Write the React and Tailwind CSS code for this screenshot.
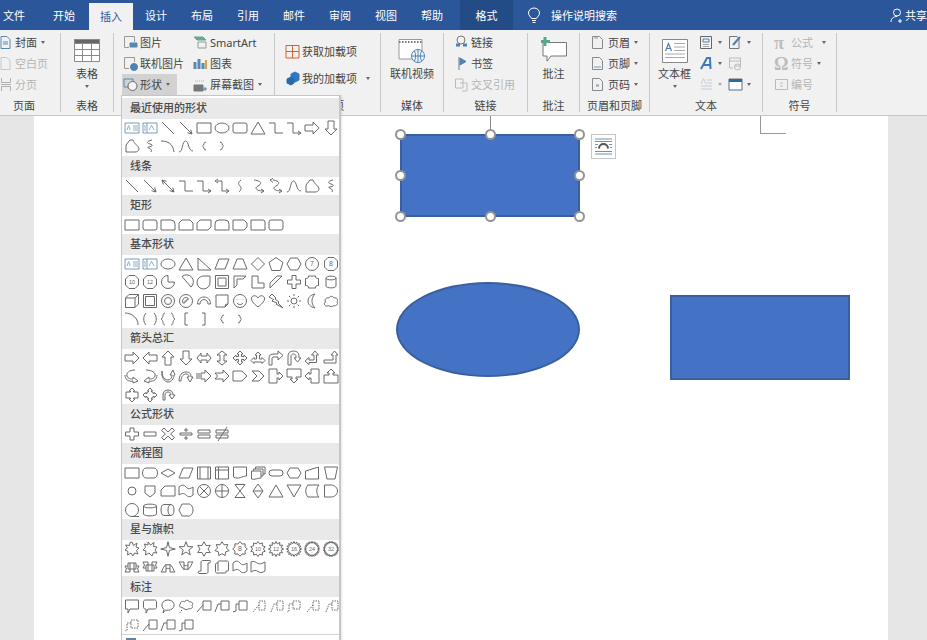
import React from 'react';

const star = (n, r2 = 4.6, r1 = 7.3) => {
  let d = '';
  for (let i = 0; i < n * 2; i++) {
    const r = i % 2 ? r2 : r1;
    const a = (Math.PI * i) / n - Math.PI / 2;
    d += `${i ? 'L' : 'M'}${(8 + r * Math.cos(a)).toFixed(2)} ${(8 + r * Math.sin(a)).toFixed(2)}`;
  }
  return d + 'Z';
};

const C = 'M1.5 8a6.5 6.5 0 1 0 13 0a6.5 6.5 0 1 0-13 0Z';
const OCT = 'M5 1.5H11L14.5 5V11L11 14.5H5L1.5 11V5Z';
const RECT = 'M1 3H15V13H1Z';

const S = {
  tb: 'M1 3H15V13H1Z', vtb: 'M1 3H15V13H1Z M5 3V13',
  line: 'M2 2L14 14', arrow: 'M2 2L14 14M14 14L9.5 12.7M14 14L12.7 9.5',
  dbl: 'M2 2L14 14M14 14L9.5 12.7M14 14L12.7 9.5M2 2L6.5 3.3M2 2L3.3 6.5',
  rect: RECT, oval: 'M1 8a7 5 0 1 0 14 0a7 5 0 1 0-14 0Z',
  round: 'M3 3H13a2 2 0 0 1 2 2V11a2 2 0 0 1-2 2H3a2 2 0 0 1-2-2V5a2 2 0 0 1 2-2Z',
  tri: 'M8 2L15 14H1Z', rtTri: 'M2 2L15 14H2Z', para: 'M5 3H15L11 13H1Z', trap: 'M5 3H11L15 13H1Z',
  diamond: 'M8 1.5L14.5 8L8 14.5L1.5 8Z', penta: 'M8 1.5L15 6.5L12.3 14.5H3.7L1 6.5Z', hex: 'M4.5 2H11.5L15 8L11.5 14H4.5L1 8Z',
  elbow: 'M1 3H7V13H15', elbowArr: 'M1 3H7V13H15M15 13L12 11M15 13L12 15',
  elbowDbl: 'M3 3H8V13H15M15 13L12 11M15 13L12 15M1 3L4 1M1 3L4 5',
  rArrow: 'M1 5H9V2L15 8L9 14V11H1Z', lArrow: 'M15 5H7V2L1 8L7 14V11H15Z',
  uArrow: 'M5 15V7H2L8 1L14 7H11V15Z', dArrow: 'M5 1V9H2L8 15L14 9H11V1Z',
  lr: 'M1 8L5 3V6H11V3L15 8L11 13V10H5V13Z', ud: 'M8 1L13 5H10V11H13L8 15L3 11H6V5H3Z',
  quad: 'M8 1L11 4H9.5V6.5H12V5L15 8L12 11V9.5H9.5V12H11L8 15L5 12H6.5V9.5H4V11L1 8L4 5V6.5H6.5V4H5Z',
  lru: 'M8 2L11 5H9.5V9H12V7.5L15 10.5L12 13.5V12H4V13.5L1 10.5L4 7.5V9H6.5V5H5Z',
  bent: 'M1 15V8C1 5 3 4 6 4H10V1L15 5.5L10 10V7H6C4.5 7 4 7.5 4 9V15Z',
  uturn: 'M2 15V6C2 3 4 1 7.5 1S13 3 13 6V8H15L11.5 12L8 8H10V6C10 5 9 4 7.5 4S5 5 5 6V15Z',
  lUp: 'M1 11L5 7.5V10H10V5H7.5L11 1L14.5 5H12.5V12.5H5V14.5Z',
  bUp: 'M1 10H10V5H8L11.5 1L15 5H13V13H1Z',
  cRight: 'M11 2C5 2 2 5 3 8S7 11 9 11V9L14 13L9 15V13C4 14 1 11 1 7',
  cLeft: 'M4 2C10 2 14 5 13 8S9 11 7 11V9L2 13L7 15V13C12 14 15 11 15 7',
  cUp: 'M2 3C2 9 5 12 8 12S12 9 12 7H10L13 2L15 7H14C14 11 11 14 8 14S1 10 2 3Z',
  cDown: 'M1 13C1 7 4 4 8 4S13 6 13 9H15L12 14L9 9H11C11 7 10 6 8 6S3 8 3 13Z',
  striped: 'M1 5V11M3 5V11M5 5H9V2L15 8L9 14V11H5Z', notched: 'M1 5H9V2L15 8L9 14V11H1L3.5 8Z',
  home: 'M1 3H10L15 8L10 13H1Z', chevron: 'M2 3H9L14 8L9 13H2L7 8Z',
  rCall: 'M1 1H9V6H11V4L15 8L11 12V10H9V15H1Z', dCall: 'M1 1H15V9H10V11H12L8 15L4 11H6V9H1Z',
  lCall: 'M15 1H7V6H5V4L1 8L5 12V10H7V15H15Z', uCall: 'M1 15H15V7H10V5H12L8 1L4 5H6V7H1Z',
  udCall: 'M8 1L11 4H9.5V5H14V11H9.5V12H11L8 15L5 12H6.5V11H2V5H6.5V4H5Z',
  qCall: 'M8 1L10.5 3.5H9.5V5H11V6.5H12.5V5.5L15 8L12.5 10.5V9.5H11V11H9.5V12.5H10.5L8 15L5.5 12.5H6.5V11H5V9.5H3.5V10.5L1 8L3.5 5.5V6.5H5V5H6.5V3.5H5.5Z',
  circ: 'M3 13V8C3 5 5 3 8 3S13 5 13 8H15L12 12L9 8H11C11 6 10 5 8 5S5 6 5 8V13Z',
  free: 'M2 14V7L6 2H9C10 6 15 8 15 11C15 13 13 14 11 14Z',
  scrib: 'M10 2C5 3 4 5 8 6C12 7 10 9 6 9C5 11 11 10 9 14', curveC: 'M1 3C8 3 13 6 14 14', curve: 'M1 14C5 14 4 3 7.5 3S10 13 15 13',
  sCurve: 'M9 2C6 4 6 6 8 8S9 12 7 14', sArr: 'M4 2C12 3 12 6 8 8S6 13 14 13M14 13L11 11M14 13L11 15',
  sDbl: 'M5 2C12 3 12 6 8 8S6 13 14 13M14 13L11 11M14 13L11 15M2 2L5 0.5M2 2L5 4.5',
  bL: 'M10 4C7 4 8.5 7.5 6.5 8C8.5 8.5 7 12 10 12', bR: 'M6 4C9 4 7.5 7.5 9.5 8C7.5 8.5 9 12 6 12',
  sq1: 'M1 3H11a4 4 0 0 1 4 4V13H1Z', sq2: 'M5 3H11a4 4 0 0 1 4 4V13H1V7a4 4 0 0 1 4-4Z',
  snip2: 'M4 3H12L15 6V13H1V6Z', snipD: 'M4 3H15V10L12 13H1V6Z', snip3: 'M1 3H12L15 6V10L12 13H1Z',
  sq3: 'M1 3H13a2 2 0 0 1 2 2V13H1Z', sq4: 'M3 3H15V11a2 2 0 0 1-2 2H1V5a2 2 0 0 1 2-2Z',
  c7: C, c8: OCT, c10: OCT, c12: OCT,
  pie: 'M8 1.5a6.5 6.5 0 1 0 6.5 6.5H8Z', chord: 'M4 2.5L13 13a6.5 6.5 0 1 0-9-10.5Z',
  tear: 'M14 2H8a6.5 6.5 0 1 0 6 6Z', frame: 'M1.5 1.5H14.5V14.5H1.5ZM4 4H12V12H4Z',
  half: 'M2 14V2H14L11 5H5V11Z', lshape: 'M2 2H8V9H14V14H2Z', diag: 'M2 14V9L9 2H14Z',
  cross: 'M6 1.5H10V6H14.5V10H10V14.5H6V10H1.5V6H6Z', plaque: 'M4.5 2H11.5C11.5 4 12.5 4.5 14.5 4.5V11.5C12.5 11.5 11.5 12 11.5 14H4.5C4.5 12 3.5 11.5 1.5 11.5V4.5C3.5 4.5 4.5 4 4.5 2Z',
  can: 'M3 4C3 1.5 13 1.5 13 4V12C13 14.5 3 14.5 3 12ZM3 4C3 6.5 13 6.5 13 4',
  cube: 'M1.5 5H11V14.5H1.5ZM1.5 5L5 1.5H14.5L11 5M14.5 1.5V11L11 14.5',
  bevel: 'M1.5 1.5H14.5V14.5H1.5ZM3.5 3.5H12.5V12.5H3.5Z', donut: C + 'M4.5 8a3.5 3.5 0 1 0 7 0a3.5 3.5 0 1 0-7 0Z',
  noSym: C + 'M4.5 8a3.5 3.5 0 0 0 .8 2.2L10.2 5.3A3.5 3.5 0 0 0 4.5 8ZM5.8 10.7L10.7 5.8', arcB: 'M1.5 11C1.5 7 4 4 8 4S14.5 7 14.5 11H12C12 8.5 10.5 6.5 8 6.5S4 8.5 4 11Z',
  fold: 'M2 2H14V11L11 14H2ZM11 14L11.5 11.5L14 11', smile: C + 'M5 6v.5M11 6v.5M5 10C6.5 12 9.5 12 11 10',
  heart: 'M8 14C3 10 1 7.5 1.5 5C2 2.5 6 1.5 8 5C10 1.5 14 2.5 14.5 5C15 7.5 13 10 8 14Z',
  bolt: 'M4 1L8 5L7 6L11 9L10 10L15 15L8 11L9 10L4 8L5.5 6.5L1 4Z',
  sun: 'M5 8a3 3 0 1 0 6 0a3 3 0 1 0-6 0ZM8 1V3M8 13V15M1 8H3M13 8H15M3 3L4.4 4.4M11.6 11.6L13 13M13 3L11.6 4.4M3 13L4.4 11.6',
  moon: 'M11 1C6 2 4 5 4 8S6 14 11 15C8.5 12.5 8 10 8 8S8.5 3.5 11 1Z',
  cloud: 'M4 13C1 13 0.5 10 2.5 9C1 6 4 4 6 5C7 2.5 10 3 11 5C13.5 4 15.5 7 14 9C15.5 11 13 13.5 11 12.5C9.5 14 7 14 6 12.5C5.5 13 5 13 4 13Z',
  arc: 'M1 2C8 2 14 7 14 14', dBrk: 'M4 2C1 5 1 11 4 14M12 2C15 5 15 11 12 14',
  dBrc: 'M5 2C2 2 4 7 1 8C4 9 2 14 5 14M11 2C14 2 12 7 15 8C12 9 14 14 11 14',
  lBrk: 'M10 2H7V14H10', rBrk: 'M6 2H9V14H6',
  plus: 'M6 2H10V6H14.5V10H10V14H6V10H1.5V6H6Z', minus: 'M2 6H14V10H2Z', mult: 'M4 2L8 6L12 2L14.5 4.5L10.5 8L14.5 11.5L12 14L8 10L4 14L1.5 11.5L5.5 8L1.5 4.5Z',
  div: 'M2 7H14V9H2ZM7 3H9V5H7ZM7 11H9V13H7Z', eq: 'M2 4H14V7H2ZM2 9H14V12H2Z', neq: 'M2 4H14V7H2ZM2 9H14V12H2ZM4 15L13 1',
  flowT: 'M4 3H12a3.5 5 0 0 1 0 10H4a3.5 5 0 0 1 0-10Z', flowD: 'M8 4L15 8L8 12L1 8Z', pre: 'M1.5 2H14.5V14H1.5ZM4 2V14M12 2V14',
  intern: 'M1.5 2H14.5V14H1.5ZM1.5 5H14.5M4.5 2V14', doc: 'M1.5 2H14.5V11C10 11 7 15 1.5 12Z',
  mdoc: 'M1.5 6H11V13C8 13 5 15 1.5 14ZM3.5 6V4H13V11H11M5.5 4V2H15V9H13', term: 'M4 5H12a3 3 0 0 1 0 6H4a3 3 0 0 1 0-6Z',
  prep: 'M4 3H12L15 8L12 13H4L1 8Z', mInp: 'M1.5 6L14.5 2V14H1.5Z', mOp: 'M1.5 2H14.5L12 14H4Z',
  conn: 'M4 8a4 4 0 1 0 8 0a4 4 0 1 0-8 0Z', off: 'M3 3H13V10L8 14L3 10Z', card: 'M5 3H15V13H1V7Z',
  tape: 'M1 4C4 1.5 6 1.5 8 4S12 6 15 4V12C12 14.5 10 14 8 12S4 10 1 12Z', sumJ: C + 'M3.5 3.5L12.5 12.5M12.5 3.5L3.5 12.5', orJ: C + 'M1.5 8H14.5M8 1.5V14.5',
  coll: 'M3 1.5H13L3 14.5H13Z', sort: 'M8 1L13 8L8 15L3 8ZM3 8H13', ext: 'M8 2L15 14H1Z', mrg: 'M1 2H15L8 14Z',
  stored: 'M4 2H15C12 5 12 11 15 14H4C1 11 1 5 4 2Z', delay: 'M1.5 2H8C12 2 14.5 5 14.5 8S12 14 8 14H1.5Z',
  seq: C + 'M8 14.5H15', mag: 'M1.5 4C1.5 1.5 14.5 1.5 14.5 4V12C14.5 14.5 1.5 14.5 1.5 12ZM1.5 4C1.5 6.5 14.5 6.5 14.5 4',
  direct: 'M4 2.5H11C13 2.5 14 5 14 8S13 13.5 11 13.5H4C2 13.5 1 11 1 8S2 2.5 4 2.5ZM11 2.5C9 2.5 8 5 8 8S9 13.5 11 13.5',
  display: 'M4 2H11C13 2 15 5 15 8S13 14 11 14H4L1 8Z',
  ex1: 'M8 1L9.5 4.5L13 2L12 6L15 7L12.5 9.5L14 13L10.5 12L9 15L7 12L3.5 14L4 10.5L1 9L3.5 7L1.5 4L5.5 4.5L6 1.5Z',
  ex2: 'M6 1L8.5 4L12 1.5L11.5 5.5L15 6L13 9L15 12L11.5 11.5L10 15L7 12L3.5 14L4 10L1 9L3.5 6.5L2.5 3L6 4Z',
  s4: star(4, 2, 7.3), s5: star(5, 3, 7.3), s6: star(6, 4, 7.3), s7: star(7, 4.6, 7.3), s8: star(8, 5.4, 7.3), s10: star(10, 5.4, 7.5), s12: star(12, 5.2, 7.6), s16: star(16, 5.4, 7.6), s24: star(24, 5.8, 7.6), s32: star(32, 6, 7.6),
  r1: 'M1 7H4V4H12V7H15L13.5 10L15 13H10V10H6V13H1L2.5 10ZM4 7V10H6M12 7V10H10M6 4V10M10 4V10',
  r2: 'M1 3H6V6H10V3H15L13.5 6L15 9H12V12H4V9H1L2.5 6ZM4 9V6H6M12 9V6H10M6 6V12M10 6V12',
  r3: 'M1 13C3 11 3 8 4 8C4 5 12 5 12 8C13 8 13 11 15 13H10V10C8 9 8 9 6 10V13ZM6 5V10M10 5V10',
  r4: 'M1 3H6V6C8 7 8 7 10 6V3H15C13 5 13 8 12 8C12 11 4 11 4 8C3 8 3 5 1 3ZM6 6V11M10 6V11',
  vs: 'M5 4C5 2 6 1.5 7 1.5H14C15 1.5 15 4 13 4H12V13C12 14 11 14.5 10 14.5H3C2 14.5 1.5 12 4 12H5Z',
  hs: 'M1.5 6C1.5 4 2 4 4 4V3C4 2 4.5 2 5 2H13C14 2 14.5 2.5 14.5 3.5V11C14.5 12 14 12 12 12V13C12 14 11.5 14 11 14H3C2 14 1.5 13.5 1.5 12.5ZM4 4V12',
  wave: 'M1 4C4 1.5 6 1.5 8 4S12 6 15 4V12C12 14.5 10 14 8 12S4 10 1 12Z',
  dwave: 'M1 3C4 1.5 6 3.5 8 4.5S12 4.5 15 3V12C12 14 10 14 8 12.5S4 11 1 13Z',
  cR: 'M1.5 2H14.5V11H6L4 15V11H1.5Z', cRd: 'M3.5 2H12.5C14 2 14.5 3 14.5 4V9C14.5 10 14 11 12.5 11H6L4 15V11H3.5C2 11 1.5 10 1.5 9V4C1.5 3 2 2 3.5 2Z',
  cO: 'M4 11.5C0 8 2 2 8 2S16 8 12 11C10 12.5 7 12.5 5.5 12L3 15Z',
  cC: 'M4 9.5C1 9.5 1 6.5 2.5 6C2 3.5 5 2.5 6.5 4C7.5 1.5 11 2 11.5 4C14 3 15.5 6 14 7.5C15.5 9.5 13 11.5 11 10.5C9.5 12 7 12 6 10.5C5.5 10.5 5 10 4 9.5ZM3 12.5h1M1.5 14.5h1',
  l1: 'M7 3H15V12H7ZM7 7L1 14', l2: 'M7 3H15V12H7ZM7 6H4L1 14', l3: 'M7 3H15V12H7ZM7 6H4V13L1 14',
  l1d: 'M9 3H15V12H9V3ZM9 7L3 14', l2d: 'M9 3H15V12H9V3ZM9 6H6L3 14', l3d: 'M7 3H14V11H7V3ZM7 6H3V13L1 14',
};

const DASHED = ['l1d', 'l2d', 'l3d'];
const LABEL = { c7: '7', c8: '8', c10: '10', c12: '12', s8: '8', s10: '10', s12: '12', s16: '16', s24: '24', s32: '32' };

const Shape = ({ name }) => {
  const isText = name === 'tb' || name === 'vtb';
  return (
    <svg viewBox="0 0 16 16" className="w-4 h-4" fill="none" stroke={isText ? '#7d9cb8' : '#6a6a6a'} strokeWidth="1" strokeDasharray={DASHED.includes(name) ? '1.5 1' : undefined}>
      <path d={S[name]} />
      {name === 'tb' && <path d="M9 6H14M9 8H14M9 10H14M3 10L4.6 5.6L6.2 10" stroke="#8fadc6" />}
      {name === 'vtb' && <path d="M2 6H4M2 8H4M2 10H4M7 10L9.6 5.4L12.2 10" stroke="#8fadc6" />}
      {LABEL[name] && (
        <text x="8" y="10.4" textAnchor="middle" fontSize={LABEL[name].length > 1 ? 5.5 : 7} fill="#666" stroke="none" fontFamily="Liberation Sans, sans-serif">
          {LABEL[name]}
        </text>
      )}
    </svg>
  );
};

const GROUPS = [
  ['最近使用的形状', 'tb vtb line arrow rect oval round tri elbow elbowArr rArrow dArrow free scrib curveC curve bL bR'],
  ['线条', 'line arrow dbl elbow elbowArr elbowDbl sCurve sArr sDbl curve free scrib'],
  ['矩形', 'rect round sq1 snip2 snipD sq2 snip3 sq3 round'],
  ['基本形状', 'tb vtb oval tri rtTri para trap diamond penta hex c7 c8 c10 c12 pie chord tear frame half lshape diag cross plaque can cube bevel donut noSym arcB fold smile heart bolt sun moon cloud arc dBrk dBrc lBrk rBrk bL bR'],
  ['箭头总汇', 'rArrow lArrow uArrow dArrow lr ud quad lru bent uturn lUp bUp cRight cLeft cUp cDown striped notched home chevron rCall dCall lCall uCall udCall qCall circ'],
  ['公式形状', 'plus minus mult div eq neq'],
  ['流程图', 'rect flowT flowD para pre intern doc mdoc term prep mInp mOp conn off card tape sumJ orJ coll sort ext mrg stored delay seq mag direct display'],
  ['星与旗帜', 'ex1 ex2 s4 s5 s6 s7 s8 s10 s12 s16 s24 s32 r1 r2 r3 r4 vs hs wave dwave'],
  ['标注', 'cR cRd cO cC l1 l2 l3 l1d l2d l3d l1d l2d l3d l1 l2 l3'],
];

const Caret = ({ className = '' }) => <span className={`inline-block w-0 h-0 border-x-[2.5px] border-x-transparent border-t-[3px] border-t-[#666] ${className}`} />;

const I = ({ children, w = 15, h = 15 }) => (
  <svg width={w} height={h} viewBox={`0 0 ${w} ${h}`} fill="none" stroke="#7a7a7a" className="shrink-0">
    {children}
  </svg>
);

const Row = ({ icon, label, caret, caretGap = 'ml-[4px]', off, active, slim, className = '' }) => (
  <div className={`flex items-center h-[21px] ${off ? 'text-[#b4b4b4]' : 'text-[#444]'} ${active ? 'bg-[#d2d2d2]' : ''} ${className}`}>
    <span className={`${slim ? 'w-[15px]' : 'w-[17px]'} flex justify-start shrink-0`}>{icon}</span>
    <span className="whitespace-nowrap">{label}</span>
    {caret && <Caret className={caretGap} />}
  </div>
);

const Group = ({ w, label, children, className = '' }) => (
  <div className="relative h-[79px] mt-[3px] border-r border-[#c8c8c8] shrink-0 flex flex-col" style={{ width: w }}>
    <div className={`h-[64px] -mt-[1px] ${className}`}>{children}</div>
    <div className="text-center text-[#444] leading-[16px] mt-[1px]">{label}</div>
  </div>
);

const Big = ({ icon, label, caret }) => (
  <div className="flex flex-col items-center text-[#444]">
    <div className="h-[32px] flex items-center">{icon}</div>
    <div className="leading-[16px] mt-[1px] whitespace-nowrap">{label}</div>
    {caret && <Caret className="mt-[4px]" />}
  </div>
);

const Tab = ({ w, children, className = '' }) => (
  <div className={`h-full flex items-center justify-center text-[#fff] shrink-0 ${className}`} style={{ width: w }}>
    {children}
  </div>
);

const Handle = ({ className }) => <div className={`absolute w-[11px] h-[11px] rounded-full bg-white border-2 border-[#949494] ${className}`} />;

const DocIcon = ({ mark }) => (
  <I w={13} h={15}>
    <path d="M1.5 1.5H8.5L11.5 4.5V13.5H1.5Z" stroke="#8a8a8a" />
    <path d={mark} stroke="#7a98b8" />
  </I>
);

const Glyph = ({ children }) => (
  <span className="font-bold text-[#bdbdbd] text-[18px] leading-none" style={{ fontFamily: '"Liberation Serif", serif' }}>{children}</span>
);

export default function App() {
  return (
    <div className="relative w-[927px] h-[640px] overflow-hidden bg-[#e6e6e6] text-[11px] flex flex-col" style={{ fontFamily: '"Noto Sans CJK SC", "Noto Sans", sans-serif' }}>
      {/* title tabs */}
      <div className="h-[30px] bg-[#2b579a] flex shrink-0">
        <Tab w={41} className="pr-[13px]">文件</Tab>
        <Tab w={46}>开始</Tab>
        <Tab w={44} className="ml-[2px] mt-[3px] !h-[27px] bg-[#f1f1f1] !text-[#2b579a]">插入</Tab>
        <Tab w={46}>设计</Tab>
        <Tab w={46}>布局</Tab>
        <Tab w={46}>引用</Tab>
        <Tab w={46}>邮件</Tab>
        <Tab w={46}>审阅</Tab>
        <Tab w={46}>视图</Tab>
        <Tab w={46}>帮助</Tab>
        <Tab w={53} className="ml-[5px] bg-[#234b85]">格式</Tab>
        <div className="flex items-center text-white ml-[14px]">
          <svg width="14" height="17" viewBox="0 0 14 17" fill="none" stroke="#fff" strokeWidth="1">
            <path d="M4.5 11.5C3.5 9.5 1.5 8.5 1.5 6A5.5 5 0 0 1 12.5 6C12.5 8.5 10.5 9.5 9.5 11.5ZM5 13.5H9M5.5 15.5H8.5" />
          </svg>
          <span className="ml-[10px]">操作说明搜索</span>
        </div>
        <div className="ml-auto flex items-center text-white whitespace-nowrap w-[37px] overflow-hidden shrink-0">
          <svg width="14" height="15" viewBox="0 0 14 15" fill="none" stroke="#fff" strokeWidth="1" className="shrink-0">
            <path d="M3.5 4.5a3.5 3.5 0 1 0 7 0a3.5 3.5 0 1 0-7 0ZM1 14C1 10.5 3.5 8.5 7 8.5M10 11V15M8 13H12" />
          </svg>
          <span className="ml-[1px]">共享</span>
        </div>
      </div>

      {/* ribbon */}
      <div className="h-[86px] bg-[#f1f1f1] border-b border-[#c6c6c6] flex shrink-0">
        <Group w={61}>
          <Row slim label="封面" caret icon={<I><path d="M1 1.5H7L10 4.5V13.5H1Z" stroke="#5b87ad" /><path d="M3 7H8M3 9H8" stroke="#5b87ad" /></I>} />
          <Row slim label="空白页" off icon={<I><path d="M1 1.5H7L10 4.5V13.5H1Z" stroke="#c8c8c8" /></I>} />
          <Row slim label="分页" off icon={<I><path d="M1.5 1V5.5H10.5V1M1 7.5H11M1.5 14V9.5H10.5V14" stroke="#b0b0b0" /></I>} />
          <div className="absolute left-0 top-[64px] w-[48px] text-center text-[#444] leading-[16px]">页面</div>
        </Group>
        <Group w={53}>
          <Big caret label="表格" icon={
            <svg width="26" height="23" viewBox="0 0 26 23" fill="none" stroke="#8a8a8a" className="mt-[4px]">
              <path d="M.5 .5H25.5V22.5H.5Z" fill="#fff" />
              <path d="M.5 .5H25.5V4.5H.5Z" fill="#666" />
              <path d="M.5 10.5H25.5M.5 16.5H25.5M8.5 4V22M17.5 4V22" />
            </svg>
          } />
          <div className="absolute left-0 right-0 top-[64px] text-center text-[#444] leading-[16px]">表格</div>
        </Group>
        <Group w={161} className="flex pl-[8px]">
          <div className="w-[71px]">
            <Row label="图片" className="pl-[1px]" icon={<I><path d="M1.5 1.5H11.5V7M1.5 1.5V12.5H6" stroke="#999" /><path d="M7 8H14V12H7Z" fill="#5b87ad" stroke="#5b87ad" /></I>} />
            <Row label="联机图片" className="pl-[1px]" icon={<I><path d="M1.5 1.5H11.5V6M1.5 1.5V12.5H6" stroke="#999" /><circle cx="11" cy="11" r="3.5" fill="#4f82b3" stroke="#4f82b3" /></I>} />
            <Row label="形状" caret active className="pl-[1px] w-[55px]" icon={<I><path d="M1 2H10V10H1Z" stroke="#5b87ad" /><circle cx="9.5" cy="9" r="4.5" fill="#f4f4f4" stroke="#666" /></I>} />
          </div>
          <div>
            <Row label={<span style={{ fontFamily: '"Noto Sans", sans-serif' }}>SmartArt</span>} icon={<I><path d="M1 2H10L13 5H4Z" fill="#6aa88e" stroke="#6aa88e" /><path d="M5 7H13V13H5Z" stroke="#999" /></I>} />
            <Row label="图表" icon={<I><path d="M2 6V13M6 3V13M10 7V13" stroke="#5b87ad" strokeWidth="3" /><path d="M13 4V13" stroke="#d6a24e" strokeWidth="2" /></I>} />
            <Row label="屏幕截图" caret icon={<I><path d="M1 8H10V14H1Z" fill="#777" stroke="#777" /><path d="M12 10V14M10 12H14" stroke="#4f82b3" /><path d="M2 4H12" stroke="#aaa" strokeDasharray="1 1" /></I>} />
          </div>
        </Group>
        <Group w={106} className="pl-[10px] pt-[8px]">
          <div className="flex items-center h-[22px] text-[#444]">
            <span className="w-[17px]"><I><path d="M1 1.5H14V14H1ZM7.5 1.5V14M1 7.5H14" stroke="#d2622e" /></I></span>获取加载项
          </div>
          <div className="flex items-center h-[22px] mt-[5px] text-[#444]">
            <span className="w-[17px]"><I><path d="M6 3L10 1L14 3V9L10 11L6 9Z" fill="#2e78c2" stroke="#2e78c2" /><path d="M2 8L6 6L9 8V12L6 14L2 12Z" fill="#2a6aa8" stroke="#2a6aa8" /></I></span>我的加载项
            <Caret className="ml-[9px]" />
          </div>
          <div className="absolute left-0 right-0 top-[64px] text-center text-[#444] leading-[16px]">加载项</div>
        </Group>
        <Group w={63}>
          <Big label="联机视频" icon={
            <svg width="28" height="26" viewBox="0 0 28 26" fill="none" className="mt-[6px]">
              <path d="M1 1.5H24V21H1Z" fill="#fff" stroke="#999" />
              <path d="M1 4H24" stroke="#777" strokeDasharray="1.5 1.5" strokeWidth="2" />
              <circle cx="20" cy="18" r="6.5" fill="#f4f8fc" stroke="#4f82b3" />
              <path d="M13.5 18H26.5M20 11.5V24.5M16.5 13C18 16 18 20 16.5 23M23.5 13C22 16 22 20 23.5 23" stroke="#4f82b3" />
            </svg>
          } />
          <div className="absolute left-0 right-0 top-[64px] text-center text-[#444] leading-[16px]">媒体</div>
        </Group>
        <Group w={84} className="pl-[10px]">
          <Row label="链接" icon={<I><circle cx="7" cy="5" r="4" stroke="#777" /><path d="M2 10H6M9 10H13" stroke="#4f82b3" strokeWidth="3" /></I>} />
          <Row label="书签" icon={<I><path d="M5 1V14" stroke="#777" /><path d="M6 2L12 5.5L6 9Z" fill="#4f82b3" stroke="#4f82b3" /></I>} />
          <Row label="交叉引用" off icon={<I><path d="M1.5 2H9V11H1.5ZM6 6H13V14H8" stroke="#bbb" /></I>} />
          <div className="absolute left-0 right-0 top-[64px] text-center text-[#444] leading-[16px]">链接</div>
        </Group>
        <Group w={52}>
          <Big label="批注" icon={
            <svg width="28" height="28" viewBox="0 0 28 28" fill="none" className="mt-[3px]">
              <path d="M3 6.5H26.5V20H11L7 25V20H3Z" fill="#fff" stroke="#777" />
              <path d="M5 1V10M1 5.5H10" stroke="#5aa58d" strokeWidth="3" />
            </svg>
          } />
          <div className="absolute left-0 right-0 top-[64px] text-center text-[#444] leading-[16px]">批注</div>
        </Group>
        <Group w={70} className="pl-[11px]">
          <Row label="页眉" caret icon={<DocIcon mark="M3 3H7" />} />
          <Row label="页脚" caret icon={<DocIcon mark="M3 11H10" />} />
          <Row label="页码" caret icon={<DocIcon mark="M5 8H8M5 9H8" />} />
          <div className="absolute left-0 right-0 top-[64px] text-center text-[#444] leading-[16px]">页眉和页脚</div>
        </Group>
        <Group w={113} className="flex">
          <div className="w-[49px]">
            <Big caret label="文本框" icon={
              <svg width="26" height="24" viewBox="0 0 26 24" fill="none" className="mt-[5px]">
                <path d="M.5 .5H25.5V23.5H.5Z" fill="#fff" stroke="#888" />
                <path d="M3.5 12L6.5 4.5L9.5 12M4.7 9.5H8.3" stroke="#4a7ba8" strokeWidth="1.2" />
                <path d="M12 4.5H23M12 8H23M12 11.5H23M3 15H23M3 18.5H23" stroke="#aaa" />
              </svg>
            } />
          </div>
          <div className="w-[29px]">
            <div className="flex items-center h-[21px]"><I><path d="M1.5 1.5H12.5V13.5H1.5Z" stroke="#666" /><path d="M4 4H10V7H4Z" stroke="#4f82b3" /><path d="M4 9.5H10M4 11.5H10" stroke="#aaa" /></I><Caret className="ml-[4px]" /></div>
            <div className="flex items-center h-[21px]"><I><path d="M2 13L8 2H11L11.5 13M4.5 9H11" stroke="#3d78bd" strokeWidth="2" /></I><Caret className="ml-[4px]" /></div>
            <div className="flex items-center h-[21px] opacity-50"><I><path d="M2 7L4.5 1.5L7 7M8 3H13M8 6H13M2 9H13M2 12H13" stroke="#9ab" /></I><Caret className="ml-[4px]" /></div>
          </div>
          <div>
            <div className="flex items-center h-[21px]"><I><path d="M1.5 1.5H9L11 4V13.5H1.5Z" stroke="#777" /><path d="M5 10L12 2" stroke="#4f82b3" strokeWidth="2" /></I><Caret className="ml-[4px]" /></div>
            <div className="flex items-center h-[21px]"><I><path d="M1.5 2H12.5V10H7M1.5 2V12H5M1.5 5H12.5" stroke="#bbb" /><circle cx="9.5" cy="11" r="3" stroke="#bbb" /></I></div>
            <div className="flex items-center h-[21px]"><I><path d="M1 2H14V13H1Z" fill="#fff" stroke="#5a6f86" /><path d="M1 3.5H14" stroke="#2e68a8" strokeWidth="3" /></I><Caret className="ml-[4px]" /></div>
          </div>
          <div className="absolute left-0 right-0 top-[64px] text-center text-[#444] leading-[16px]">文本</div>
        </Group>
        <Group w={74} className="pl-[11px]">
          <Row label="公式" off caret caretGap="ml-[9px]" icon={<Glyph>π</Glyph>} />
          <Row label="符号" off caret icon={<Glyph>Ω</Glyph>} />
          <Row label="编号" off icon={<I><path d="M1.5 2.5H13.5V12.5H1.5Z" stroke="#bbb" /><path d="M6 6H9M6 9H9" stroke="#bbb" /></I>} />
          <div className="absolute left-0 right-0 top-[64px] text-center text-[#444] leading-[16px]">符号</div>
        </Group>
      </div>

      {/* document workspace */}
      <div className="flex-1 flex">
        <div className="w-[34px] shrink-0" />
        <div className="relative w-[854px] bg-white">
          <div className="absolute left-[726px] top-0 w-[26px] h-[18px] border-l border-b border-[#999]" />
          <div className="absolute left-[456px] top-0 w-px h-[16px] bg-[#8b8b8b]" />
          <div className="absolute left-[366px] top-[18px] w-[180px] h-[83px] bg-[#4472c4] border-2 border-[#3a5f9f]">
            <Handle className="-left-[7px] -top-[7px]" />
            <Handle className="left-[83px] -top-[7px]" />
            <Handle className="-right-[7px] -top-[7px]" />
            <Handle className="-left-[7px] top-[34px]" />
            <Handle className="-right-[7px] top-[34px]" />
            <Handle className="-left-[7px] -bottom-[7px]" />
            <Handle className="left-[83px] -bottom-[7px]" />
            <Handle className="-right-[7px] -bottom-[7px]" />
          </div>
          <div className="absolute left-[557px] top-[18px] w-[25px] h-[25px] border border-[#c6c6c6] bg-white flex items-center justify-center">
            <svg width="19" height="19" viewBox="0 0 19 19" fill="none">
              <path d="M1 2H18M1 4.5H18M1 14.5H18M1 17H18" stroke="#6b93b8" />
              <path d="M5 11.5C5 5.5 14 5.5 14 11.5" stroke="#555" strokeWidth="2" />
              <path d="M1 7.5H4M15 7.5H18M1 10.5H3M16 10.5H18" stroke="#6b93b8" />
            </svg>
          </div>
          <div className="absolute left-[362px] top-[166px] w-[184px] h-[95px] rounded-[50%] bg-[#4472c4] border-2 border-[#3a5f9f]" />
          <div className="absolute left-[636px] top-[179px] w-[180px] h-[85px] bg-[#4472c4] border-2 border-[#3a5f9f]" />
        </div>
      </div>

      {/* shapes dropdown */}
      <div className="absolute left-[121px] top-[95px] w-[220px] h-[560px] bg-white border border-[#c6c6c6] border-r-2 pt-[2px] shadow-[1px_1px_2px_rgba(0,0,0,0.1)]">
        {GROUPS.map(([title, names]) => (
          <div key={title}>
            <div className="h-[21px] bg-[#e9e9e9] text-[#4a4a4a] font-medium pl-[8px] pb-[2px] flex items-center">{title}</div>
            <div className="grid grid-cols-[repeat(12,18.05px)] auto-rows-[18.26px] pl-[1px]">
              {names.split(' ').map((n, i) => (
                <div key={i} className="flex items-center justify-center">
                  <Shape name={n} />
                </div>
              ))}
            </div>
          </div>
        ))}
        <div className="h-px bg-[#d4d4d4]" />
        <div className="pl-[4px] pt-[3px]">
          <div className="w-[10px] h-[10px] bg-[#5b87ad]" />
        </div>
      </div>
    </div>
  );
}
